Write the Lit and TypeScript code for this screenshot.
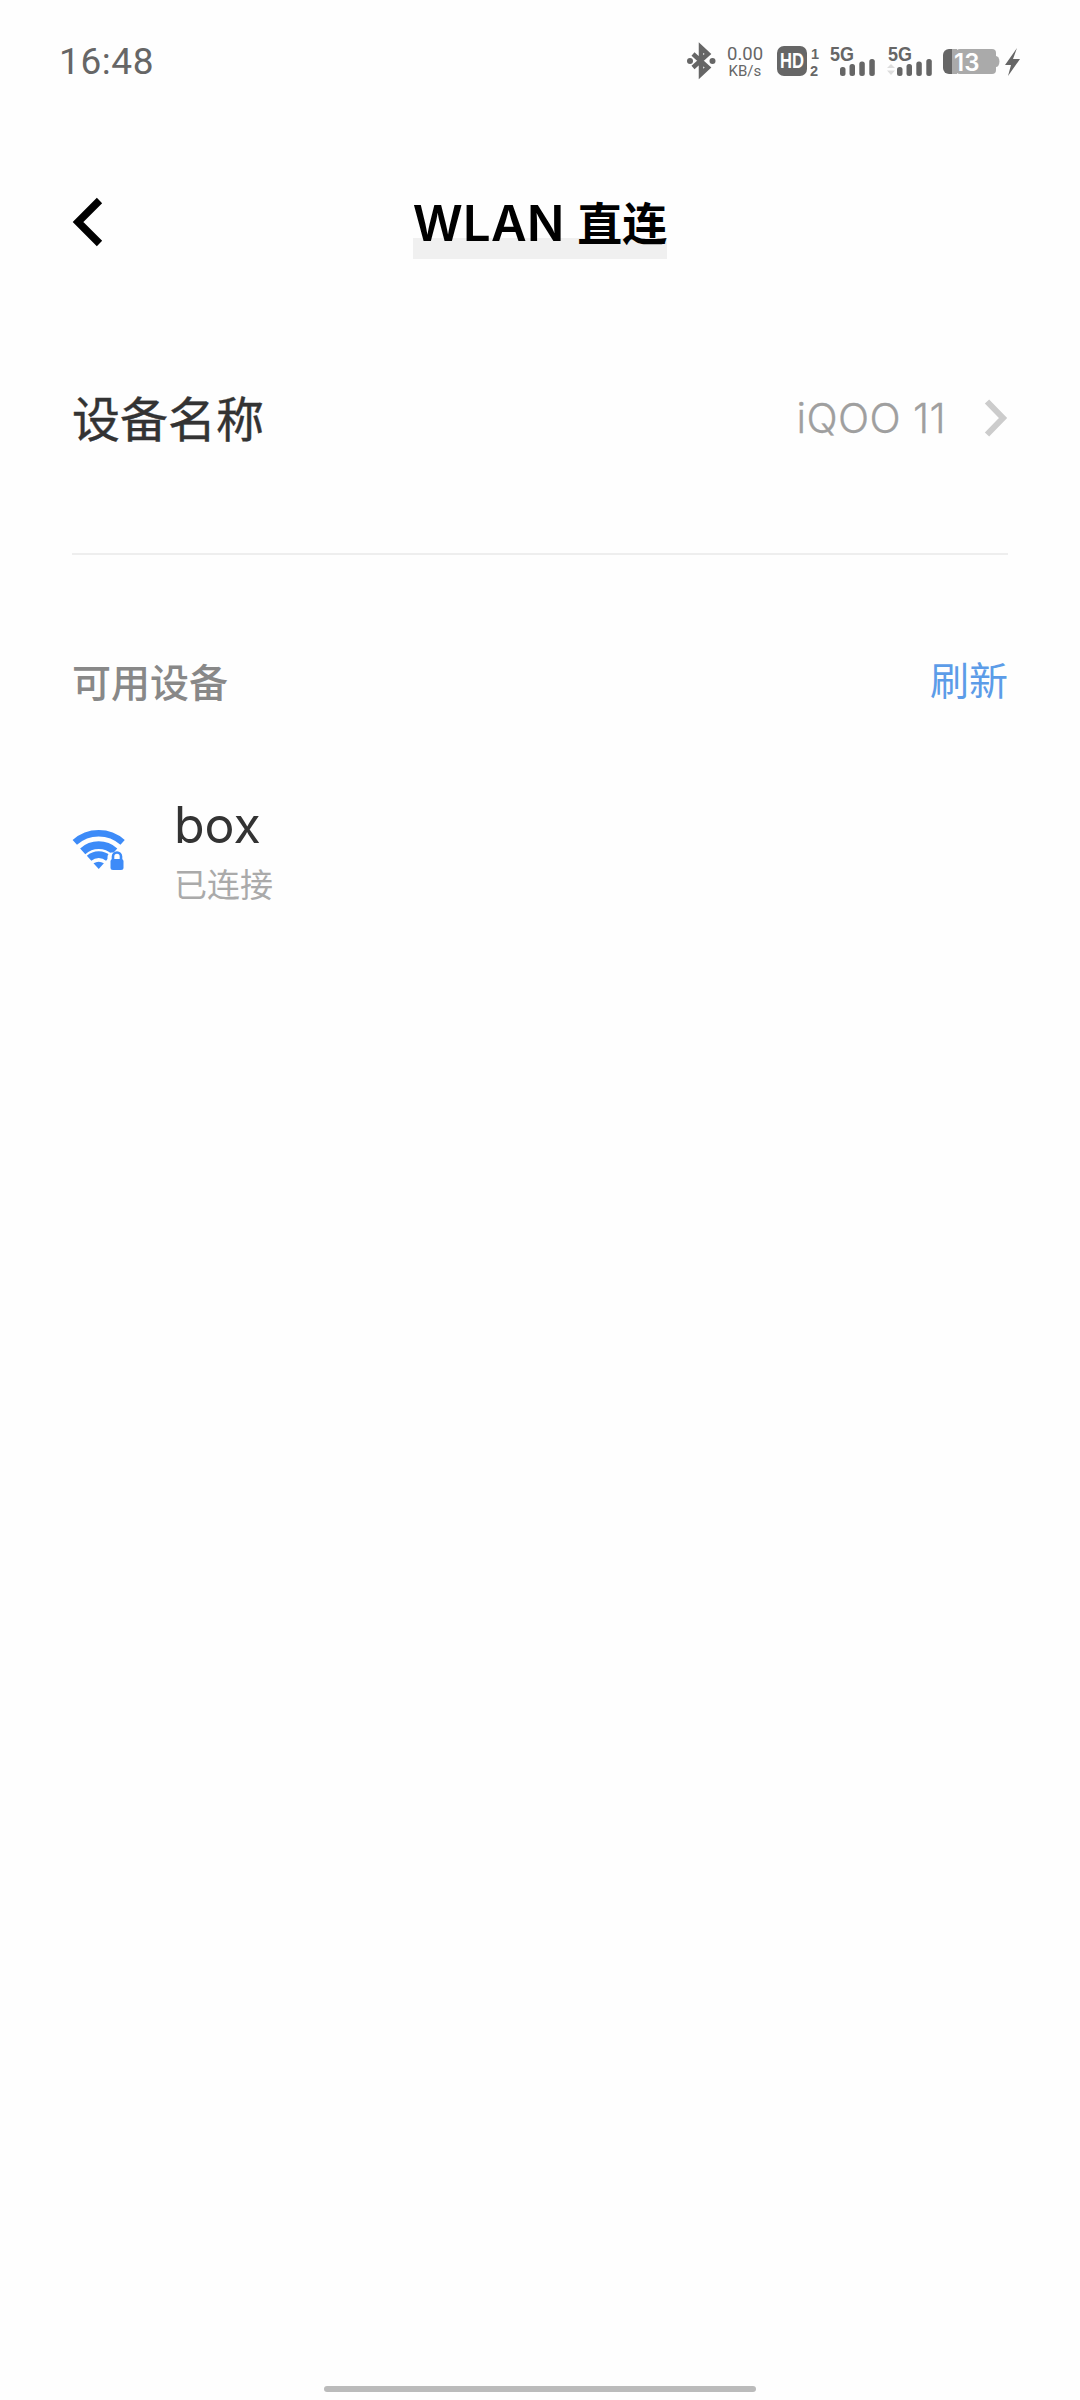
import { LitElement, html, css, svg } from "lit";
import { customElement } from "lit/decorators.js";

const bars = (x: number) => svg`
  <rect x="${x}" y="26" width="5.5" height="9" rx="2.5"/>
  <rect x="${x + 9.5}" y="23" width="5.5" height="12" rx="2.5"/>
  <rect x="${x + 19.3}" y="20.5" width="5.5" height="14.5" rx="2.5"/>
  <rect x="${x + 29.3}" y="18" width="5.5" height="17" rx="2.5"/>`;

@customElement("app-root")
export class AppRoot extends LitElement {
  static styles = css`
    :host { display: block; width: 1080px; height: 2400px; background: #fefefe; overflow: hidden;
      font-family: "Noto Sans CJK SC", sans-serif; color: #333; }
    .page { display: flex; flex-direction: column; height: 2400px; }
    .status { height: 122px; flex: none; display: flex; align-items: center; justify-content: space-between; padding: 0 60px 0 59px; box-sizing: border-box; }
    .time { font: 400 37px/1 Roboto, sans-serif; color: #666; letter-spacing: 0.6px; padding-top: 1px; }
    .status svg { display: block; }
    .nav { height: 200px; flex: none; display: grid; grid-template-columns: 1fr auto 1fr; align-items: start; }
    .back { display: block; margin: 68px 0 0 70px; }
    .title { font: 600 49px/35px Inter, "Noto Sans CJK SC", sans-serif; color: #000; height: 53px; margin-top: 84px; letter-spacing: 0.3px;
      background: linear-gradient(#fefefe 0 32px, #f0f0f0 32px); white-space: nowrap; }
    .title-cjk { font-size: 45px; letter-spacing: 0; }
    .name { height: 231px; flex: none; display: flex; align-items: center; justify-content: space-between; margin: 0 72px; border-bottom: 2px solid #eee; }
    .name-label { font: 400 48px/1 "Noto Sans CJK SC", sans-serif; color: #333; margin-top: -43px; -webkit-text-stroke: 0.4px #333; }
    .name-val { display: flex; align-items: center; margin-top: -39px; gap: 36px; }
    .val { font: 300 41px/1 Inter, sans-serif; color: #9f9f9f; letter-spacing: 0.4px; -webkit-text-stroke: 0.3px #9f9f9f; }
    .section { display: flex; justify-content: space-between; align-items: center; margin: 95px 72px 0; height: 60px; }
    .sec-title { font: 500 39px/1 "Noto Sans CJK SC", sans-serif; color: #888; padding-top: 1px; }
    .refresh { font: 400 39px/1 "Noto Sans CJK SC", sans-serif; color: #5c9ce8; padding-bottom: 4px; }
    .device { display: flex; align-items: center; margin: 84px 72px 0; gap: 48px; }
    .texts { display: flex; flex-direction: column; }
    .dname { font: 400 50px/62px Inter, sans-serif; color: #333; }
    .dsub { font: 400 33px/46px "Noto Sans CJK SC", sans-serif; color: #aaa; margin-top: 4px; }
    .wifi { display: block; margin-top: -3px; }
    .spacer { flex: 1; }
    .home { flex: none; display: flex; justify-content: center; padding-bottom: 8px; }
    .bar { width: 432px; height: 6px; border-radius: 3px; background: #bbb; }
  `;

  render() {
    return html`<div class="page">
      <div class="status">
        <span class="time">16:48</span>
        <svg width="340" height="40" viewBox="0 0 340 40" fill="#666">
          <path d="M13 13 L28 26.5 L21 33 V6.5 L28 13 L13 26.5" fill="none" stroke="#666" stroke-width="4.5"/>
          <circle cx="10" cy="20" r="3"/><circle cx="32.5" cy="20" r="3"/>
          <text x="47" y="19" font-family="Roboto" font-size="18.5" fill="#666">0.00</text>
          <text x="48.5" y="35" font-family="Roboto" font-size="15" fill="#666">KB/s</text>
          <rect x="97" y="5" width="30" height="30" rx="7"/>
          <text x="100" y="27" font-family="'Liberation Sans'" font-weight="700" font-size="22" textLength="24" lengthAdjust="spacingAndGlyphs" fill="#fff">HD</text>
          <text x="131" y="18" font-family="'Liberation Sans'" font-weight="700" font-size="14.5">1</text>
          <text x="130" y="35" font-family="'Liberation Sans'" font-weight="700" font-size="14.5">2</text>
          <text x="150" y="20" font-family="'Liberation Sans'" font-weight="700" font-size="20" textLength="24" lengthAdjust="spacingAndGlyphs">5G</text>
          ${bars(160)}
          <text x="208" y="20" font-family="'Liberation Sans'" font-weight="700" font-size="20" textLength="24" lengthAdjust="spacingAndGlyphs">5G</text>
          <path d="M207 27 L211 23 L215 27 Z M207 29.5 L215 29.5 L211 34 Z" fill="#ddd"/>
          ${bars(217)}
          <rect x="276" y="8" width="40" height="25" rx="4" fill="#aaa"/>
          <path d="M269 8 h3.5 v25 h-3.5 a6 6 0 0 1 -6 -6 v-13 a6 6 0 0 1 6 -6z" fill="#666"/>
          <path d="M272 8 h5 v25 h-5z" fill="#aaa"/>
          <path d="M316 15 a2.5 4 0 0 1 0 11z" fill="#aaa"/>
          <text x="274" y="29.5" font-family="Inter" font-weight="600" font-size="24" fill="#fff">13</text>
          <path d="M337 7 L325 24 H331 L328 35 L340 18 H333 Z"/>
        </svg>
      </div>
      <div class="nav">
        <svg class="back" width="40" height="64" viewBox="0 0 40 64"><path d="M29.5 10.5 L8 32 L29.5 53.5" fill="none" stroke="#000" stroke-width="7.5"/></svg>
        <div class="title">WLAN <span class="title-cjk">直连</span></div>
        <div></div>
      </div>
      <div class="name">
        <span class="name-label">设备名称</span>
        <span class="name-val"><span class="val">iQOO 11</span>
          <svg width="26" height="40" viewBox="0 0 26 40"><path d="M5 3.5 L21 20 L5 36.5" fill="none" stroke="#ccc" stroke-width="6"/></svg>
        </span>
      </div>
      <div class="section"><span class="sec-title">可用设备</span><span class="refresh">刷新</span></div>
      <div class="device">
        <svg class="wifi" width="54" height="44" viewBox="0 0 54 44" fill="none" stroke="#3d8bf8">
          <path d="M2.8 15.4 A35.75 35.75 0 0 1 50.6 15.4" stroke-width="6.5"/>
          <path d="M10.7 24.3 A23.85 23.85 0 0 1 42.7 24.3" stroke-width="7.7"/>
          <path d="M17.1 31.3 A14.35 14.35 0 0 1 36.3 31.3" stroke-width="6.7"/>
          <path d="M26.7 42 L21.5 36.3 Q26.7 33 31.9 36.3 Z" fill="#3d8bf8" stroke="none"/>
          <rect x="37" y="27" width="16" height="16" rx="3" fill="#fefefe" stroke="#fefefe" stroke-width="3"/>
          <path d="M41 33 v-3.5 a4 4 0 0 1 8 0 v3.5" stroke-width="2.6"/>
          <rect x="38.5" y="32" width="13" height="11" rx="2.5" fill="#3d8bf8" stroke="none"/>
        </svg>
        <div class="texts"><span class="dname">box</span><span class="dsub">已连接</span></div>
      </div>
      <div class="spacer"></div>
      <div class="home"><div class="bar"></div></div>
    </div>`;
  }
}
